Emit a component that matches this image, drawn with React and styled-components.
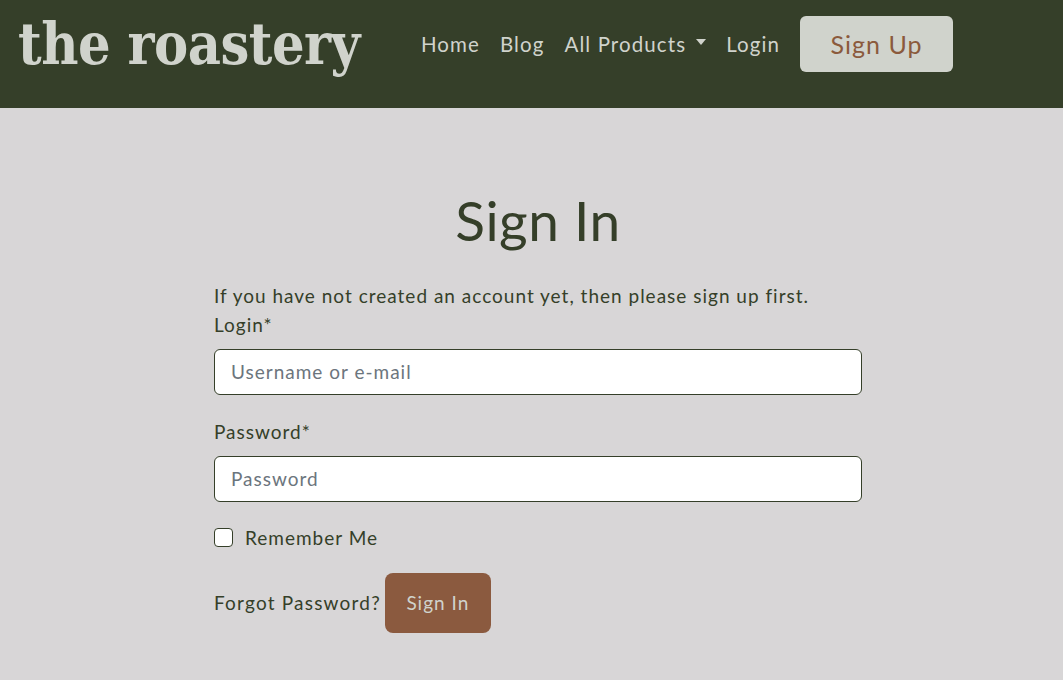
import React from 'react';
import styled, { createGlobalStyle } from 'styled-components';

const GlobalStyle = createGlobalStyle`
  html, body {
    margin: 0;
    padding: 0;
    background: #d8d6d7;
  }
  body {
    font-family: "Lato", "Noto Sans", sans-serif;
    color: #353f29;
  }
  * { box-sizing: border-box; }
`;

const Header = styled.header`
  height: 108px;
  background: #353f29;
  display: flex;
  align-items: flex-start;
  padding: 0 18px;
`;

const Logo = styled.a`
  font-family: "DejaVu Serif Condensed", "DejaVu Serif", serif;
  font-stretch: condensed;
  font-weight: bold;
  font-size: 57px;
  letter-spacing: -0.5px;
  color: #d0d3cc;
  text-decoration: none;
  line-height: 1;
  margin-top: 15px;
`;

const Nav = styled.nav`
  display: flex;
  align-items: center;
  margin-left: 51px;
  margin-top: 16px;
  height: 56px;
`;

const NavLink = styled.a`
  font-size: 20.5px;
  letter-spacing: 1.1px;
  color: #d0d3cc;
  text-decoration: none;
  padding: 0 10px;
  display: flex;
  align-items: center;
`;

const Caret = styled.span`
  display: inline-block;
  margin-left: 10px;
  width: 0;
  height: 0;
  border-left: 5.5px solid transparent;
  border-right: 5.5px solid transparent;
  border-top: 6px solid #d0d3cc;
  transform: translateY(-2px);
`;

const SignUpButton = styled.a`
  margin-left: 10px;
  width: 153px;
  height: 56px;
  border-radius: 6px;
  background: #d0d3cc;
  color: #8b5a3c;
  font-size: 25px;
  letter-spacing: 1px;
  display: flex;
  align-items: center;
  justify-content: center;
  text-decoration: none;
`;

const Main = styled.main`
  display: flex;
  flex-direction: column;
  align-items: center;
  padding: 80px 0 0 13px;
`;

const Title = styled.h1`
  margin: 0;
  font-weight: 400;
  font-size: 55px;
  letter-spacing: 0.5px;
  line-height: 64px;
  color: #353f29;
`;

const Form = styled.form`
  width: 648px;
  margin-top: 29px;
  display: flex;
  flex-direction: column;
  font-size: 19px;
  letter-spacing: 1px;
`;

const Text = styled.p`
  margin: 0;
  line-height: 29px;
`;

const Label = styled.label`
  line-height: 29px;
  margin-bottom: 9.5px;
`;

const Input = styled.input`
  width: 100%;
  height: 46px;
  border: 1px solid #353f29;
  border-radius: 6px;
  background: #fff;
  padding: 0 16px;
  font-family: inherit;
  font-size: 19px;
  letter-spacing: 1px;
  color: #353f29;
  margin-bottom: ${p => p.$gap || 0}px;
  &::placeholder { color: #6c757d; }
`;

const CheckRow = styled.label`
  display: flex;
  align-items: center;
  gap: 12px;
  line-height: 29px;
`;

const Box = styled.span`
  width: 19px;
  height: 19px;
  border: 1px solid #353f29;
  border-radius: 4px;
  background: #fff;
`;

const Actions = styled.div`
  display: flex;
  align-items: center;
  margin-top: 20.5px;
`;

const Forgot = styled.a`
  color: #353f29;
  text-decoration: none;
  margin-right: 4px;
  letter-spacing: 1.2px;
`;

const SubmitButton = styled.button`
  width: 106px;
  height: 60px;
  border: none;
  border-radius: 8px;
  background: #8b5a3f;
  color: #d0d3cc;
  font-family: inherit;
  font-size: 19px;
  letter-spacing: 1px;
`;

export default function App() {
  return (
    <>
      <GlobalStyle />
      <Header>
        <Logo href="#">the roastery</Logo>
        <Nav>
          <NavLink href="#">Home</NavLink>
          <NavLink href="#">Blog</NavLink>
          <NavLink href="#">All Products<Caret /></NavLink>
          <NavLink href="#">Login</NavLink>
          <SignUpButton href="#">Sign Up</SignUpButton>
        </Nav>
      </Header>
      <Main>
        <Title>Sign In</Title>
        <Form onSubmit={e => e.preventDefault()}>
          <Text>If you have not created an account yet, then please sign up first.</Text>
          <Label>Login*</Label>
          <Input placeholder="Username or e-mail" $gap={22.5} />
          <Label>Password*</Label>
          <Input type="password" placeholder="Password" $gap={21.5} />
          <CheckRow><Box />Remember Me</CheckRow>
          <Actions>
            <Forgot href="#">Forgot Password?</Forgot>
            <SubmitButton type="submit">Sign In</SubmitButton>
          </Actions>
        </Form>
      </Main>
    </>
  );
}
